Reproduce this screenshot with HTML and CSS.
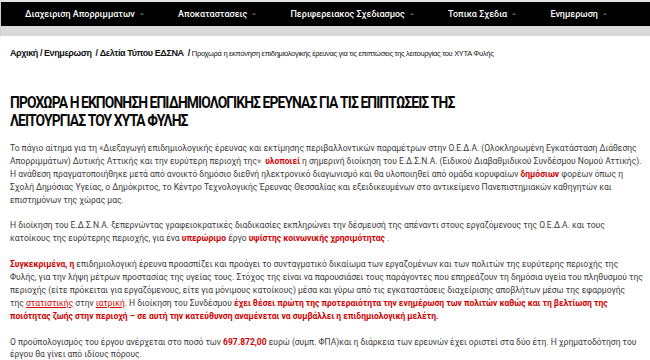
FILE: index.html
```html
<!DOCTYPE html>
<html lang="el">
<head>
<meta charset="utf-8">
<link rel="stylesheet" href="styles.css">
</head>
<body>
<header class="topbar">
  <nav class="nav">
    <a class="nav-item">Διαχειριση Απορριμματων <span class="caret">⌄</span></a>
    <a class="nav-item">Αποκαταστασεις <span class="caret">⌄</span></a>
    <a class="nav-item">Περιφερειακος Σχεδιασμος <span class="caret">⌄</span></a>
    <a class="nav-item">Τοπικα Σχεδια <span class="caret">⌄</span></a>
    <a class="nav-item">Ενημερωση <span class="caret">⌄</span></a>
  </nav>
  <div class="strip"></div>
</header>
<main class="content">
  <div class="crumbs">
    <span class="crumb">Αρχική</span><span class="sep">/</span><span class="crumb">Ενημερωση</span>&nbsp;<span class="sep">/</span><span class="crumb">Δελτία Τύπου ΕΔΣΝΑ</span>&nbsp;<span class="sep">/</span><span class="crumb-last">Προχωρά η εκπόνηση επιδημιολογικής έρευνας για τις επιπτώσεις της λειτουργίας του ΧΥΤΑ Φυλής</span>
  </div>
  <h1 class="title">ΠΡΟΧΩΡΑ Η ΕΚΠΟΝΗΣΗ ΕΠΙΔΗΜΙΟΛΟΓΙΚΗΣ ΕΡΕΥΝΑΣ ΓΙΑ ΤΙΣ ΕΠΙΠΤΩΣΕΙΣ ΤΗΣ ΛΕΙΤΟΥΡΓΙΑΣ ΤΟΥ ΧΥΤΑ ΦΥΛΗΣ</h1>
  <p>Το πάγιο αίτημα για τη «Διεξαγωγή επιδημιολογικής έρευνας και εκτίμησης περιβαλλοντικών παραμέτρων στην Ο.Ε.Δ.Α. (Ολοκληρωμένη Εγκατάσταση Διάθεσης Απορριμμάτων) Δυτικής Αττικής και την ευρύτερη περιοχή της» &nbsp;<b class="red">υλοποιεί</b> η σημερινή διοίκηση του Ε.Δ.Σ.Ν.Α. (Ειδικού Διαβαθμιδικού Συνδέσμου Νομού Αττικής). Η ανάθεση πραγματοποιήθηκε μετά από ανοικτό δημόσιο διεθνή ηλεκτρονικό διαγωνισμό και θα υλοποιηθεί από ομάδα κορυφαίων <b class="red">δημόσιων</b> φορέων όπως η Σχολή Δημόσιας Υγείας, ο Δημόκριτος, το Κέντρο Τεχνολογικής Έρευνας Θεσσαλίας και εξειδικευμένων στο αντικείμενο Πανεπιστημιακών καθηγητών και επιστημόνων της χώρας μας.</p>
  <p>Η διοίκηση του Ε.Δ.Σ.Ν.Α. ξεπερνώντας γραφειοκρατικές διαδικασίες εκπληρώνει την δέσμευσή της απέναντι στους εργαζόμενους της Ο.Ε.Δ.Α. και τους κατοίκους της ευρύτερης περιοχής, για ένα <b class="red">υπερώριμο</b> έργο <b class="red">υψίστης κοινωνικής χρησιμότητας</b> .</p>
  <p><b class="red">Συγκεκριμένα, η</b> επιδημιολογική έρευνα προασπίζει και προάγει το συνταγματικό δικαίωμα των εργαζομένων και των πολιτών της ευρύτερης περιοχής της Φυλής, για την λήψη μέτρων προστασίας της υγείας τους. Στόχος της είναι να παρουσιάσει τους παράγοντες που επηρεάζουν τη δημόσια υγεία του πληθυσμού της περιοχής (είτε πρόκειται για εργαζόμενους, είτε για μόνιμους κατοίκους) μέσα και γύρω από τις εγκαταστάσεις διαχείρισης αποβλήτων μέσω της εφαρμογής της&nbsp;<a class="link">στατιστικής</a> στην <a class="link">ιατρική</a>. Η διοίκηση του Συνδέσμου <b class="red">έχει θέσει πρώτη της προτεραιότητα την ενημέρωση των πολιτών καθώς και τη βελτίωση της ποιότητας ζωής στην περιοχή – σε αυτή την κατεύθυνση αναμένεται να συμβάλλει η επιδημιολογική μελέτη.</b></p>
  <p>Ο προϋπολογισμός του έργου ανέρχεται στο ποσό των <b class="red">697.872,00</b> ευρώ (συμπ. ΦΠΑ)και η διάρκεια των ερευνών έχει οριστεί στα δύο έτη. Η χρηματοδότηση του έργου θα γίνει από ιδίους πόρους.</p>
</main>
</body>
</html>
```
FILE: styles.css
```css
* { box-sizing: border-box; }
html, body { margin: 0; padding: 0; background: #fff; }
body { font-family: Roboto, "Noto Sans", sans-serif; color: #333; }
.topbar { border-top: 2px solid #e4e4e4; border-left: 1px solid #cfcfcf; }
.nav {
  background: #000;
  height: 24px;
  display: flex;
  align-items: center;
  padding-left: 24px;
  gap: 33px;
}
.nav-item {
  color: #fff;
  font-family: Roboto, "Noto Sans", sans-serif;
  font-size: 9px;
  font-weight: 500;
  white-space: nowrap;
}
.caret { font-size: 7px; color: #aaa; position: relative; top: -2px; margin-left: 2px; }
.strip { height: 10px; background: #d9d9d9; }
.content { padding: 0 5px 0 10px; }
.crumbs {
  margin-top: 10px;
  font-family: "Liberation Sans", Arial, sans-serif;
  font-size: 9px;
  font-weight: bold;
  color: #111;
  letter-spacing: -0.4px;
  line-height: 14px;
}
.sep { margin: 0 2px; }
.crumb-last { font-weight: normal; font-size: 7.5px; letter-spacing: -0.3px; }
.title {
  width: 560px;
  margin: 32px 0 13px;
  font-family: Roboto, "Liberation Sans", sans-serif;
  font-weight: 700;
  font-size: 17px;
  line-height: 18px;
  letter-spacing: -1.1px;
  color: #0a0a0a;
  transform: scaleX(0.815);
  transform-origin: left top;
}
p {
  margin: 0 0 12.9px;
  font-size: 8.5px;
  line-height: 12.9px;
  color: #3a3a3a;
}
.red { color: #d10000; font-weight: 700; }
.link { color: #d10000; text-decoration: underline; }
```
